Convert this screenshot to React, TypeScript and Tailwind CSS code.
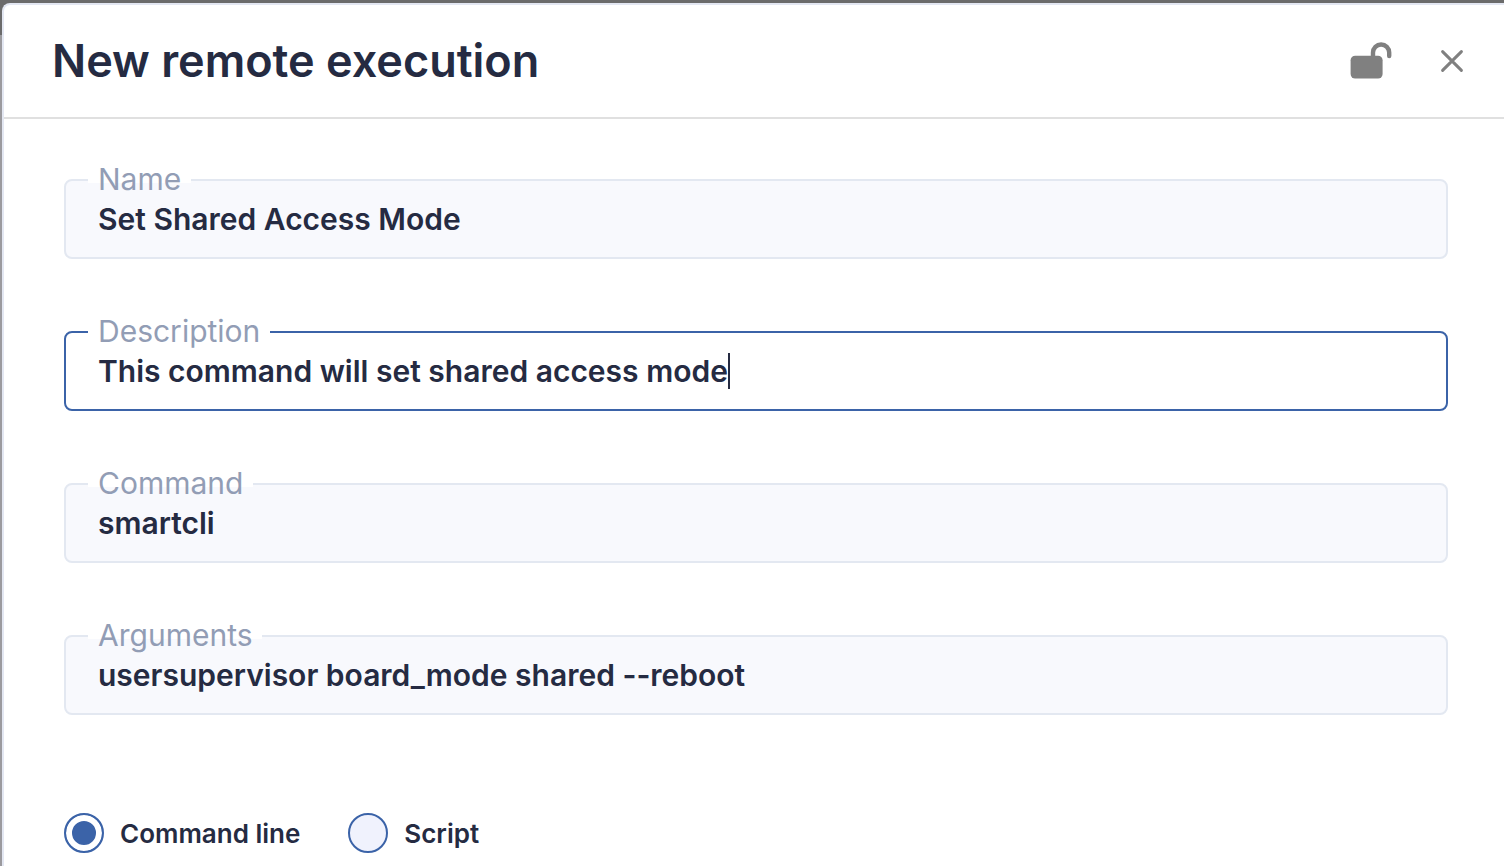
import { useState } from "react";
import clsx from "clsx";

const initialValues = {
  name: "Set Shared Access Mode",
  description: "This command will set shared access mode",
  command: "smartcli",
  args: "usersupervisor board_mode shared --reboot",
};

type FieldName = keyof typeof initialValues;

const fields: { name: FieldName; label: string }[] = [
  { name: "name", label: "Name" },
  { name: "description", label: "Description" },
  { name: "command", label: "Command" },
  { name: "args", label: "Arguments" },
];

const modes = [
  { value: "command", label: "Command line" },
  { value: "script", label: "Script" },
];

interface TextFieldProps {
  id: string;
  label: string;
  value: string;
  active: boolean;
  onFocus: () => void;
  onChange: (value: string) => void;
}

function TextField({ id, label, value, active, onFocus, onChange }: TextFieldProps) {
  return (
    <div
      className={clsx(
        "relative flex h-20 items-center rounded-lg border-2 px-8",
        active ? "border-[#3b63a8] bg-white" : "border-[#e3e8f1] bg-[#f8f9fd]"
      )}
    >
      {/* the upper part of the label hides the border behind it */}
      <label
        htmlFor={id}
        className="absolute -top-[22px] left-[22px] bg-linear-to-b from-white from-60% to-transparent to-60% px-[10px] text-[30px] leading-10 text-[#929db5]"
      >
        {label}
      </label>
      <input
        id={id}
        type="text"
        value={value}
        onFocus={onFocus}
        onChange={(e) => onChange(e.target.value)}
        className={clsx(
          "h-10 bg-transparent text-[30px] font-semibold outline-none",
          active ? "field-sizing-content caret-transparent" : "w-full"
        )}
      />
      {active && <span className="h-9 w-0.5 bg-[#252b42]" />}
    </div>
  );
}

export default function App() {
  const [values, setValues] = useState(initialValues);
  const [activeField, setActiveField] = useState<FieldName>("description");
  const [mode, setMode] = useState("command");

  return (
    <div className="h-screen overflow-hidden bg-linear-to-b from-[#6b6b6b] from-4% to-[#9b9a9e] to-4% pt-[3px] pl-0.5 font-['Inter',sans-serif] text-[#252b42]">
      <main className="min-h-full rounded-tl-lg border-t-2 border-l-2 border-[#e3e7f2] bg-white">
        <header className="flex h-[114px] items-center justify-between border-b-2 border-[#e0e0e0] pr-9 pl-12">
          <h1 className="text-[45px] font-semibold">New remote execution</h1>
          <div className="flex items-center gap-11 text-[#808080]">
            <button type="button" aria-label="Unlock">
              <svg width="44" height="40" viewBox="0 0 44 40" fill="none">
                <rect x="2.6" y="14.8" width="32" height="22.8" rx="4.5" fill="currentColor" />
                <path
                  d="M25 17V11.6a8.1 8.1 0 0 1 16.2 0V15"
                  stroke="currentColor"
                  strokeWidth="4.4"
                  strokeLinecap="round"
                />
              </svg>
            </button>
            <button type="button" aria-label="Close">
              <svg width="32" height="32" viewBox="0 0 32 32" fill="none">
                <path d="M6.6 6.6L25.4 25.4M25.4 6.6L6.6 25.4" stroke="currentColor" strokeWidth="3" strokeLinecap="round" />
              </svg>
            </button>
          </div>
        </header>

        <form className="pt-[60px] pr-14 pl-[60px]">
          <div className="flex flex-col gap-[72px]">
            {fields.map((field) => (
              <TextField
                key={field.name}
                id={field.name}
                label={field.label}
                value={values[field.name]}
                active={activeField === field.name}
                onFocus={() => setActiveField(field.name)}
                onChange={(value) => setValues({ ...values, [field.name]: value })}
              />
            ))}
          </div>

          <div className="mt-[98px] flex gap-12">
            {modes.map((item) => (
              <label key={item.value} className="flex items-center gap-4 text-[26px] font-semibold">
                <input
                  type="radio"
                  name="mode"
                  value={item.value}
                  checked={mode === item.value}
                  onChange={() => setMode(item.value)}
                  className="size-10 appearance-none rounded-full border-2 border-[#3b63a8] bg-[#f0f2fd] checked:bg-[#3b63a8] checked:shadow-[inset_0_0_0_6px_white]"
                />
                {item.label}
              </label>
            ))}
          </div>
        </form>
      </main>
    </div>
  );
}
